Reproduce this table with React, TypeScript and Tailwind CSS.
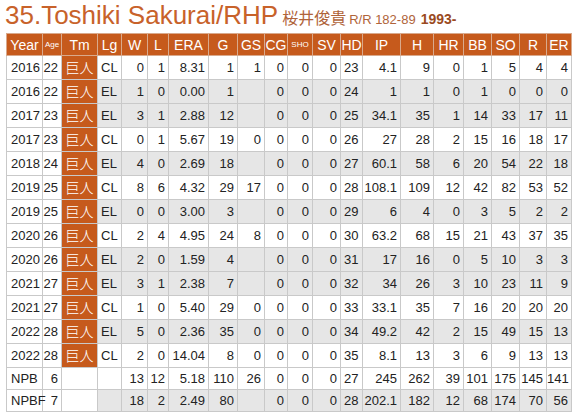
const rows: (string | number)[][] = [
  ["2016", 22, "巨人", "CL", 0, 1, "8.31", 1, 1, 0, 0, 0, 23, "4.1", 9, 0, 1, 5, 4, 4],
  ["2016", 22, "巨人", "EL", 1, 0, "0.00", 1, "", 0, 0, 0, 24, "1", 1, 0, 1, 0, 0, 0],
  ["2017", 23, "巨人", "EL", 3, 1, "2.88", 12, "", 0, 0, 0, 25, "34.1", 35, 1, 14, 33, 17, 11],
  ["2017", 23, "巨人", "CL", 0, 1, "5.67", 19, 0, 0, 0, 0, 26, "27", 28, 2, 15, 16, 18, 17],
  ["2018", 24, "巨人", "EL", 4, 0, "2.69", 18, "", 0, 0, 0, 27, "60.1", 58, 6, 20, 54, 22, 18],
  ["2019", 25, "巨人", "CL", 8, 6, "4.32", 29, 17, 0, 0, 0, 28, "108.1", 109, 12, 42, 82, 53, 52],
  ["2019", 25, "巨人", "EL", 0, 0, "3.00", 3, "", 0, 0, 0, 29, "6", 4, 0, 3, 5, 2, 2],
  ["2020", 26, "巨人", "CL", 2, 4, "4.95", 24, 8, 0, 0, 0, 30, "63.2", 68, 15, 21, 43, 37, 35],
  ["2020", 26, "巨人", "EL", 2, 0, "1.59", 4, "", 0, 0, 0, 31, "17", 16, 0, 5, 10, 3, 3],
  ["2021", 27, "巨人", "EL", 3, 1, "2.38", 7, "", 0, 0, 0, 32, "34", 26, 3, 10, 23, 11, 9],
  ["2021", 27, "巨人", "CL", 1, 0, "5.40", 29, 0, 0, 0, 0, 33, "33.1", 35, 7, 16, 20, 20, 20],
  ["2022", 28, "巨人", "EL", 5, 0, "2.36", 35, 0, 0, 0, 0, 34, "49.2", 42, 2, 15, 49, 15, 13],
  ["2022", 28, "巨人", "CL", 2, 0, "14.04", 8, 0, 0, 0, 0, 35, "8.1", 13, 3, 6, 9, 13, 13],
];

const totals: (string | number)[][] = [
  ["NPB", 6, "", "", 13, 12, "5.18", 110, 26, 0, 0, 0, 27, "245", 262, 39, 101, 175, 145, 141],
  ["NPBF", 7, "", "", 18, 2, "2.49", 80, "", 0, 0, 0, 28, "202.1", 182, 12, 68, 174, 70, 56],
];

const heads = ["Year", "Age", "Tm", "Lg", "W", "L", "ERA", "G", "GS", "CG", "SHO", "SV", "HD", "IP", "H", "HR", "BB", "SO", "R", "ER"];
const widths = [36, 19, 36, 24, 26, 21, 40, 29, 27, 23, 25, 28, 22, 38, 33, 30, 28, 28, 27, 25];

// columns that sit on the left of their cell
const leftCols = [0, 3, 12];

function Cell({ v, i, gray, tm }: { v: string | number; i: number; gray: boolean; tm: boolean }) {
  if (i === 2) {
    return (
      <td className={`border border-[#c9c9c9] text-center text-[14px] font-light text-white ${tm ? "bg-[#c65a1c]" : "bg-white"}`}>{v}</td>
    );
  }
  const shade = gray && i >= 3 ? "bg-[#e6e6e6]" : "bg-white";
  const align = i === 0 ? "text-left pl-[4px]" : leftCols.includes(i) ? "text-left pl-[3px]" : "text-right pr-[3px]";
  return <td className={`border border-[#c9c9c9] ${shade} ${align}`}>{v}</td>;
}

export default function App() {
  return (
    <div className="h-[416px] w-[575px] overflow-hidden bg-white font-['Liberation_Sans',Arial,'Noto_Sans_CJK_JP',sans-serif] text-[#222]">
      <div className="flex h-[30px] items-baseline pl-[5px]">
        <span className="text-[26px] leading-[30px] text-[#c8622a]">35.Toshiki Sakurai/RHP</span>
        <span className="ml-[4px] font-['Noto_Sans_CJK_JP',sans-serif] text-[16px] text-[#b0643a]">桜井俊貴</span>
        <span className="ml-[3px] text-[13px] text-[#b0643a]">R/R 182-89</span>
        <span className="ml-[5px] text-[14px] font-bold text-[#9a4a1e]">1993-</span>
      </div>
      <table className="ml-[6px] mt-[3px] w-[566px] table-fixed border-collapse text-[13px] leading-none">
        <colgroup>
          {widths.map((w, i) => (
            <col key={i} style={{ width: w }} />
          ))}
        </colgroup>
        <thead>
          <tr className="h-[22px] bg-[#c65a1c] text-white">
            {heads.map((h) => (
              <th
                key={h}
                className={`border border-[#d9a98c] text-center font-normal ${h === "Age" || h === "SHO" ? "text-[8px]" : "text-[14px]"}`}
              >
                {h}
              </th>
            ))}
          </tr>
        </thead>
        <tbody>
          {rows.map((r, ri) => (
            <tr key={ri} className="h-[24px]">
              {r.map((v, i) => (
                <Cell key={i} v={v} i={i} gray={r[3] === "EL"} tm />
              ))}
            </tr>
          ))}
          {totals.map((r, ri) => (
            <tr key={"t" + ri} className="h-[22px]">
              {r.map((v, i) => (
                <Cell key={i} v={v} i={i} gray={ri === 1} tm={false} />
              ))}
            </tr>
          ))}
        </tbody>
      </table>
    </div>
  );
}
